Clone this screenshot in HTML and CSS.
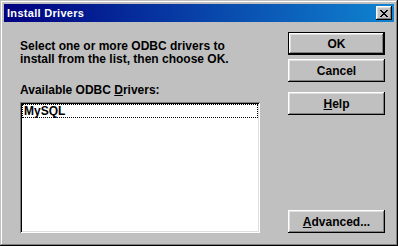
FILE: index.html
```html
<!DOCTYPE html>
<html lang="en">
<head>
  <meta charset="UTF-8" />
  <title>Install Drivers</title>
  <link rel="stylesheet" href="styles.css">
</head>
<body>
<div class="window">
  <div class="titlebar">
    <span class="title">Install Drivers</span>
    <span class="close">
      <svg width="8" height="7" viewBox="0 0 8 7" shape-rendering="crispEdges">
        <path d="M0 0h2v1h-2zM6 0h2v1h-2zM1 1h2v1h-2zM5 1h2v1h-2zM2 2h4v1h-4zM3 3h2v1h-2zM2 4h4v1h-4zM1 5h2v1h-2zM5 5h2v1h-2zM0 6h2v1h-2zM6 6h2v1h-2z" fill="#000"/>
      </svg>
    </span>
  </div>
  <div class="body">
    <div class="left">
      <p class="intro">Select one or more ODBC drivers to<br>install from the list, then choose OK.</p>
      <p class="label">Available ODBC <u>D</u>rivers:</p>
      <div class="listbox">
        <div class="item">MySQL</div>
      </div>
    </div>
    <div class="right">
      <button class="btn default">OK</button>
      <button class="btn">Cancel</button>
      <button class="btn help"><u>H</u>elp</button>
      <button class="btn advanced"><u>A</u>dvanced...</button>
    </div>
  </div>
</div>
</body>
</html>
```

FILE: styles.css
```css
body {
  margin: 0;
  background-color: #c0c0c0;
  font-family: "Liberation Sans", Arial, sans-serif;
  font-size: 12px;
  font-weight: bold;
}
.window {
  width: 398px;
  height: 246px;
  box-sizing: border-box;
  padding: 4px;
  background-color: #c0c0c0;
  box-shadow: inset -1px -1px #000, inset 1px 1px #c0c0c0, inset -2px -2px #808080, inset 2px 2px #fff;
  display: flex;
  flex-direction: column;
}
.titlebar {
  height: 18px;
  background: linear-gradient(to right, #000080, #1084d0);
  color: #fff;
  display: flex;
  align-items: center;
  justify-content: space-between;
  padding: 0 2px 0 3px;
}
.title {
  font-size: 11px;
  font-weight: bold;
  letter-spacing: 0.3px;
}
.close {
  width: 16px;
  height: 14px;
  box-sizing: border-box;
  background-color: #c0c0c0;
  box-shadow: inset -1px -1px #000, inset 1px 1px #fff, inset -2px -2px #808080, inset 2px 2px #dfdfdf;
  display: flex;
  align-items: center;
  justify-content: center;
  padding-right: 1px;
}
.body {
  flex: 1;
  display: flex;
  padding: 10px 9px 9px 16px;
}
.left {
  width: 240px;
  display: flex;
  flex-direction: column;
}
.intro {
  margin: 8px 0 0;
  line-height: 13px;
}
.label {
  margin: 18px 0 0;
  line-height: 13px;
}
.listbox {
  flex: 1;
  margin-top: 5px;
  background-color: #fff;
  box-shadow: inset 1px 1px #808080, inset -1px -1px #fff, inset 2px 2px #000, inset -2px -2px #dfdfdf;
  padding: 2px;
}
.item {
  height: 14px;
  line-height: 13px;
  box-sizing: border-box;
  border: 1px dotted #000;
  padding-left: 1px;
}
.right {
  margin-left: auto;
  width: 97px;
  display: flex;
  flex-direction: column;
}
.btn {
  height: 23px;
  width: 97px;
  box-sizing: border-box;
  border: none;
  background-color: #c0c0c0;
  box-shadow: inset -1px -1px #000, inset 1px 1px #fff, inset -2px -2px #808080, inset 2px 2px #dfdfdf;
  font-family: "Liberation Sans", Arial, sans-serif;
  font-size: 12px;
  font-weight: bold;
  color: #000;
  padding: 0;
  margin-bottom: 4px;
}
.btn.default {
  border: 1px solid #000;
}
.btn.help {
  margin-top: 6px;
}
.btn.advanced {
  margin-top: auto;
  margin-bottom: 0;
}
```
